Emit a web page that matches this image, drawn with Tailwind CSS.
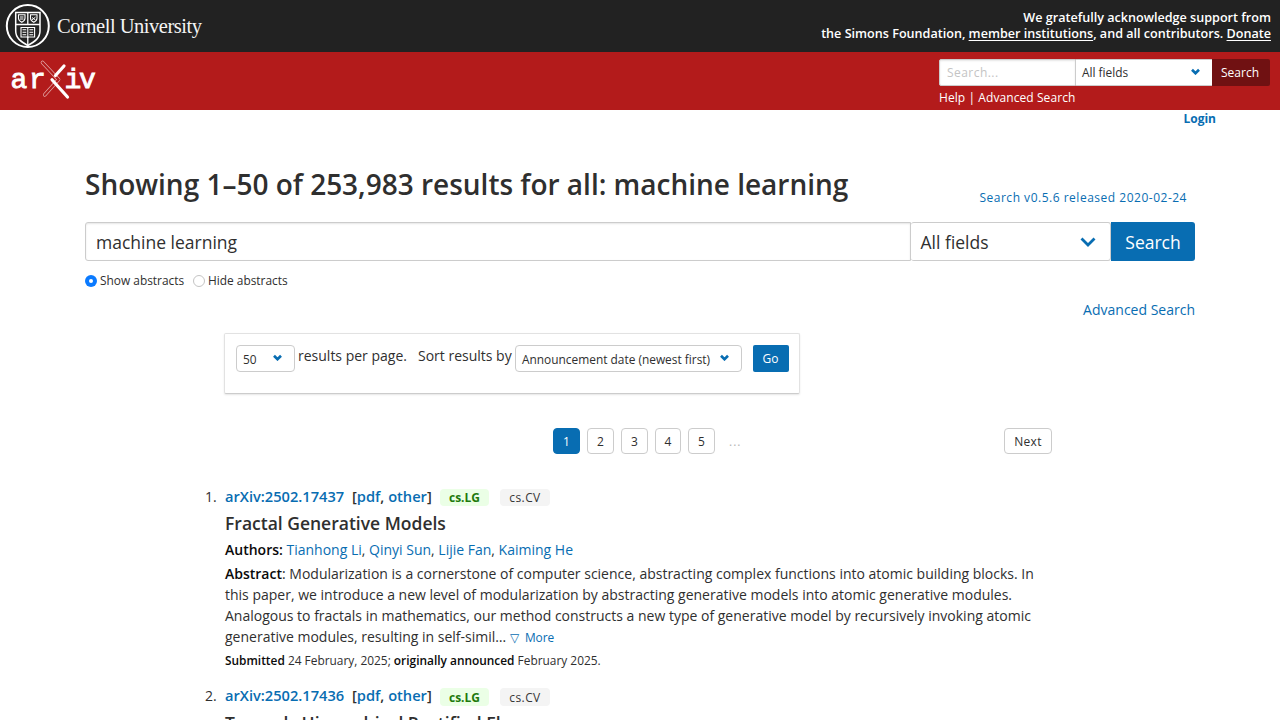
<!DOCTYPE html>
<html lang="en">
<head>
<meta charset="utf-8">
<title>Search | arXiv e-print repository</title>
<script src="https://cdn.jsdelivr.net/npm/@tailwindcss/browser@4"></script>
</head>
<body class="bg-white text-[#2f2f2f] font-['Open_Sans',sans-serif] h-[720px] overflow-hidden antialiased">
<header>
  <div class="h-[52px] bg-[#222] flex justify-between pl-[5px] pr-[9px]">
    <svg class="w-[200px] h-[52px]" viewBox="5 0 200 52" fill="none" stroke="#fff">
      <circle cx="27.8" cy="26" r="21" stroke-width="2"/>
      <path d="M15.7 12.5H40V31c0 7-5 10.500-12.200 14.500C20.700 41.500 15.700 38 15.700 31Z" stroke-width="1.500"/>
      <path d="M16 24.500H40M27.800 12.500V24.500M27.800 37v8" stroke-width="1.300"/>
      <path d="M18.500 14.800h6.500v3.500c0 2.200-1.500 3.200-3.200 4-1.800-.8-3.300-1.800-3.300-4ZM30.500 14.800h6.500v3.500c0 2.200-1.500 3.200-3.200 4-1.800-.8-3.300-1.800-3.300-4Z" stroke-width="1.100"/>
      <path d="M20 17h3.500M20 19h3.500M32 17.500l3.500 2.500M35.500 17L32 20" stroke-width="1"/>
      <path d="M21 27.500h13.600v9.500H21ZM27.800 27.500V38M22.500 29.700h3.800M22.500 32.200h3.800M22.500 34.700h3.800M29.400 29.700h3.800M29.400 32.200h3.800M29.400 34.700h3.800" stroke-width="1.100"/>
      <text x="57" y="33.200" fill="#f4f4f4" stroke="none" font-family="Liberation Serif, serif" font-size="20.500" textLength="145" lengthAdjust="spacing">Cornell University</text>
    </svg>
    <p class="pt-[10px] text-right text-white text-[12.600px] leading-4 font-semibold">We gratefully acknowledge support from<br>the Simons Foundation, <a class="underline underline-offset-2">member institutions</a>, and all contributors. <a class="underline underline-offset-2">Donate</a></p>
  </div>
  <div class="h-[58px] bg-[#b31b1b] flex justify-between pl-2 pr-[10px]">
    <svg class="w-[92px] h-[58px]" viewBox="8 52 92 58" fill="none" stroke="#fff" stroke-linecap="round">
      <g fill="#fff" stroke="#fff" stroke-width=".9" font-family="Liberation Mono, monospace" font-size="28">
        <text x="10.500 29" y="87.500">ar</text><text x="64.500 79" y="87.500">iv</text>
      </g>
      <path d="M42.500 62.500L58.500 79.500M58.500 79.500L44.800 94.800" stroke-width="3.600" opacity=".65"/>
      <path d="M42.500 62.500L58.500 79.500L44.800 94.800" stroke="#b31b1b" stroke-width="2.300"/>
      <path d="M64 66L55.500 75.500M52 79.800L67.500 97" stroke-width="3.200"/>
    </svg>
    <div class="w-[331px] pt-[7px]">
      <div class="flex h-[27px] text-xs">
        <div class="w-[137px] bg-white border border-[#ccc] rounded-l-xs shadow-[inset_0_1px_2px_rgba(10,10,10,0.1)] pl-[7px] leading-[26px] text-[#c4c4c4] tracking-[0.450px]">Search...</div>
        <div class="w-[136px] bg-white border-y border-[#ccc] flex items-center justify-between pl-1.5 pr-3"><span class="text-[11.900px]">All fields</span>
          <svg class="w-[9px] h-[7px] mb-[2px]" viewBox="0 0 10 8" fill="none" stroke="#086db2" stroke-width="3"><path d="M1 2l4 4 4-4"/></svg></div>
        <div class="w-[58px] bg-[#701112] rounded-r-xs text-white text-center leading-[28px] pr-0.5">Search</div>
      </div>
      <p class="mt-[3px] text-white text-xs leading-[18px] tracking-[0.080px]">Help | Advanced Search</p>
    </div>
  </div>
</header>
<div class="h-[18px] pr-16 text-right text-xs leading-[18px] font-bold text-[#086db2]">Login</div>
<main class="px-[85px]">
  <div class="pt-[38px] flex justify-between items-start pr-2">
    <h1 class="text-[28px] leading-[36px] font-semibold whitespace-nowrap tracking-[-0.010px]">Showing 1–50 of 253,983 results for all: machine learning</h1>
    <span class="pt-[23px] text-xs leading-[18px] text-[#086db2] tracking-[0.510px] whitespace-nowrap">Search v0.5.6 released 2020-02-24</span>
  </div>
  <div class="mt-[15px] flex h-[39px] text-[17.500px] leading-[39px]">
    <div class="w-[826px] border border-[#ccc] rounded-l-[3px] shadow-[inset_0_1px_2px_rgba(10,10,10,0.1)] pl-[10px]">machine learning</div>
    <div class="w-[200px] border-y border-r border-[#ccc] rounded-[3px] pl-[9.500px] pr-[14px] flex items-center justify-between"><span class="pt-px">All fields</span>
      <svg class="w-4 h-[10px]" viewBox="0 0 16 10" fill="none" stroke="#086db2" stroke-width="2.800"><path d="M1.500 1.500L8 8l6.500-6.500"/></svg></div>
    <div class="w-[84px] bg-[#086db2] rounded-r-[3px] text-white text-center leading-[41px]">Search</div>
  </div>
  <div class="mt-[11px] flex items-center h-[18px] text-[11.900px]">
    <span class="size-3 rounded-full bg-[#0a7aff] flex items-center justify-center"><span class="size-1 rounded-full bg-white"></span></span>
    <span class="ml-[3px] w-[93px]">Show abstracts</span>
    <span class="size-3 rounded-full border border-[#c4c4c4]"></span>
    <span class="ml-[3px]">Hide abstracts</span>
  </div>
  <div class="mt-[9px] text-right text-sm leading-[21px] text-[#086db2]">Advanced Search</div>
  <div class="ml-[139px] mt-[13px] w-[576px] h-[61px] border border-[#e2e2e2] border-b-[#ccc] rounded-xs shadow-[0_1px_2px_rgba(10,10,10,0.1)] pl-[11px] pt-[11px] flex text-sm leading-[22px]">
    <div class="w-[59px] h-[27px] border border-[#ccc] rounded-[4px] text-[11.900px] flex items-center justify-between pl-1.5 pr-3"><span>50</span>
      <svg class="w-[9px] h-[7px] mb-0.5" viewBox="0 0 10 8" fill="none" stroke="#086db2" stroke-width="3"><path d="M1 2l4 4 4-4"/></svg></div>
    <span class="ml-[3px] w-[120px]">results per page.</span>
    <span class="w-[97px] whitespace-nowrap">Sort results by</span>
    <div class="w-[227px] h-[27px] border border-[#ccc] rounded-[4px] text-[11.900px] flex items-center justify-between pl-1.5 pr-3"><span class="whitespace-nowrap">Announcement date (newest first)</span>
      <svg class="w-[9px] h-[7px] mb-0.5" viewBox="0 0 10 8" fill="none" stroke="#086db2" stroke-width="3"><path d="M1 2l4 4 4-4"/></svg></div>
    <div class="ml-[11px] w-[36px] h-[27px] bg-[#086db2] rounded-xs text-white text-xs leading-[28px] text-center pr-px">Go</div>
  </div>
  <nav class="mt-[34px] ml-[468px] flex h-[26px] text-xs leading-[26px] text-center">
    <span class="w-[27px] bg-[#086db2] border border-[#086db2] text-white rounded-[4px]">1</span>
    <span class="ml-[7px] w-[27px] border border-[#ccc] rounded-[4px]">2</span>
    <span class="ml-[7px] w-[27px] border border-[#ccc] rounded-[4px]">3</span>
    <span class="ml-[7px] w-[26px] border border-[#ccc] rounded-[4px]">4</span>
    <span class="ml-[7px] w-[27px] border border-[#ccc] rounded-[4px]">5</span>
    <span class="ml-[14px] w-[12px] text-[#b5b5b5] tracking-[1px] leading-[28px]">...</span>
    <span class="ml-[263px] w-[48px] border border-[#ccc] rounded-[4px] tracking-[0.300px]">Next</span>
  </nav>
  <ol class="ml-[120px] mt-[32px] text-sm leading-[21px]">
    <li class="flex">
      <span class="w-[20px] shrink-0">1.</span>
      <div>
        <div class="flex h-[22px] items-start font-semibold text-[#086db2]"><span class="w-[127px] text-[14.650px]">arXiv:2502.17437</span><span class="w-[88px] text-[14.650px]"><span class="text-[#2f2f2f]">[</span>pdf<span class="text-[#2f2f2f]">,</span> other<span class="text-[#2f2f2f]">]</span></span>
          <span class="mt-[3px] w-[49px] h-[17px] rounded-[4px] bg-[#ebffe6] text-[#1d7a0c] text-xs leading-[18px] text-center font-bold">cs.LG</span><span class="mt-[3px] ml-[11px] w-[50px] h-[17px] rounded-[4px] bg-[#f4f4f4] text-[#363636] text-xs leading-[18px] text-center font-normal tracking-[0.400px]">cs.CV</span></div>
        <h2 class="mt-[3px] mb-[4px] text-[17.500px] leading-[24px] font-semibold">Fractal Generative Models</h2>
        <p><b class="font-semibold text-[#0a0a0a]">Authors:</b> <span class="text-[#086db2]">Tianhong Li</span>, <span class="text-[#086db2]">Qinyi Sun</span>, <span class="text-[#086db2]">Lijie Fan</span>, <span class="text-[#086db2]">Kaiming He</span></p>
        <p class="mt-[3px] h-[84px] whitespace-nowrap"><b class="font-semibold text-[#0a0a0a]">Abstract</b>: Modularization is a cornerstone of computer science, abstracting complex functions into atomic building blocks. In<br>this paper, we introduce a new level of modularization by abstracting generative models into atomic generative modules.<br>Analogous to fractals in mathematics, our method constructs a new type of generative model by recursively invoking atomic<br>generative modules, resulting in self-simil… <span class="text-[11.900px] text-[#086db2]"><span class="mr-[3px]">▽</span> More</span></p>
        <p class="mt-[4px] text-[11.900px] leading-[18px]"><b class="font-semibold text-[#0a0a0a]">Submitted</b> 24 February, 2025; <b class="font-semibold text-[#0a0a0a]">originally announced</b> February 2025.</p>
      </div>
    </li>
    <li class="flex mt-[16px]">
      <span class="w-[20px] shrink-0">2.</span>
      <div>
        <div class="flex h-[22px] items-start font-semibold text-[#086db2]"><span class="w-[127px] text-[14.650px]">arXiv:2502.17436</span><span class="w-[88px] text-[14.650px]"><span class="text-[#2f2f2f]">[</span>pdf<span class="text-[#2f2f2f]">,</span> other<span class="text-[#2f2f2f]">]</span></span>
          <span class="mt-[3px] w-[49px] h-[18px] rounded-[4px] bg-[#ebffe6] text-[#1d7a0c] text-xs leading-[19px] text-center font-bold">cs.LG</span><span class="mt-[3px] ml-[11px] w-[50px] h-[18px] rounded-[4px] bg-[#f4f4f4] text-[#363636] text-xs leading-[19px] text-center font-normal tracking-[0.400px]">cs.CV</span></div>
        <h2 class="mt-[4px] text-[17.500px] leading-[24px] font-semibold">Towards Hierarchical Rectified Flow</h2>
      </div>
    </li>
  </ol>
</main>
</body>
</html>
